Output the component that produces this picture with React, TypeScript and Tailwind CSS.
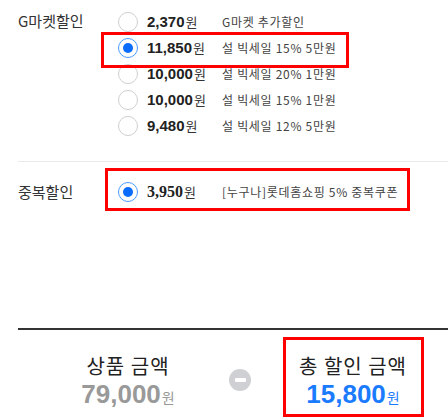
import React from 'react'

type Option = { amount: string; desc: string; checked?: boolean }

const gmarketOptions: Option[] = [
  { amount: '2,370', desc: 'G마켓 추가할인' },
  { amount: '11,850', desc: '설 빅세일 15% 5만원', checked: true },
  { amount: '10,000', desc: '설 빅세일 20% 1만원' },
  { amount: '10,000', desc: '설 빅세일 15% 1만원' },
  { amount: '9,480', desc: '설 빅세일 12% 5만원' },
]

const kr = "font-['Noto_Sans_CJK_KR',sans-serif]"

function Radio({ checked }: { checked?: boolean }) {
  return checked ? (
    <span className="flex h-[20px] w-[20px] shrink-0 items-center justify-center rounded-full border border-[#4d9bff] bg-white">
      <span className="h-[10px] w-[10px] rounded-full bg-[#0a6cff]" />
    </span>
  ) : (
    <span className="h-[20px] w-[20px] shrink-0 rounded-full border border-[#cfcfcf] bg-white" />
  )
}

function Row({ option, serif }: { option: Option; serif?: boolean }) {
  return (
    <div className="flex h-[26px] items-center">
      <Radio checked={option.checked} />
      <div className="ml-[9px] flex w-[75px] items-baseline">
        <span
          className={
            serif
              ? "font-['Liberation_Serif',serif] text-[16px] font-bold text-[#222]"
              : "font-['Liberation_Sans',sans-serif] text-[15px] font-bold text-[#222]"
          }
        >
          {option.amount}
        </span>
        <span className={`${kr} ml-px text-[13px] text-[#333]`}>원</span>
      </div>
      <span className={`${kr} text-[12px] tracking-[0.7px] text-[#444]`}>{option.desc}</span>
    </div>
  )
}

export default function App() {
  return (
    <div className="relative h-[420px] w-[448px] overflow-hidden bg-white">
      {/* G마켓할인 */}
      <div className="flex pl-[18px] pt-[9px]">
        <div className={`${kr} w-[100px] pt-[2px] text-[15px] leading-[20px] text-[#333]`}>G마켓할인</div>
        <div className="flex flex-col">
          {gmarketOptions.map((o, i) => (
            <Row key={i} option={o} />
          ))}
        </div>
      </div>
      <div className="ml-[18px] mt-[22px] h-px bg-[#eaeaea]" />

      {/* 중복할인 */}
      <div className="flex items-center pl-[18px] pt-[17px]">
        <div className={`${kr} w-[100px] text-[15px] text-[#333]`}>중복할인</div>
        <Row option={{ amount: '3,950', desc: '[누구나]롯데홈쇼핑 5% 중복쿠폰', checked: true }} serif />
      </div>

      <div className="ml-[18px] mt-[123px] h-[2px] bg-[#333]" />

      {/* summary */}
      <div className="flex items-start pl-[48px] pt-[24px]">
        <div className="flex w-[160px] flex-col items-center">
          <span className={`${kr} text-[20px] leading-[24px] tracking-[1px] text-[#222]`}>상품 금액</span>
          <div className="mt-[2px] flex items-baseline">
            <span className="font-['Liberation_Sans',sans-serif] text-[26px] font-bold leading-[28px] text-[#999]">79,000</span>
            <span className={`${kr} ml-px text-[14px] text-[#999]`}>원</span>
          </div>
        </div>
        <div className="ml-[21px] mt-[15px] flex h-[22px] w-[22px] items-center justify-center rounded-full bg-[#cfd0d4]">
          <span className="h-[4px] w-[11px] rounded-[1px] bg-white" />
        </div>
        <div className="ml-[42px] flex w-[120px] flex-col items-center">
          <span className={`${kr} whitespace-nowrap text-[20px] leading-[24px] tracking-[1px] text-[#222]`}>총 할인 금액</span>
          <div className="mt-[2px] flex items-baseline">
            <span className="font-['Liberation_Sans',sans-serif] text-[26px] font-bold leading-[28px] text-[#1a7bff]">15,800</span>
            <span className={`${kr} ml-px text-[14px] text-[#1a7bff]`}>원</span>
          </div>
        </div>
      </div>

      {/* highlight boxes */}
      <div className="pointer-events-none absolute left-[101px] top-[32px] h-[36px] w-[248px] border-[3px] border-[#ff0000]" />
      <div className="pointer-events-none absolute left-[105px] top-[168px] h-[43px] w-[305px] border-[3px] border-[#ff0000]" />
      <div className="pointer-events-none absolute left-[283px] top-[337px] h-[80px] w-[141px] border-[3px] border-[#ff0000]" />
    </div>
  )
}
